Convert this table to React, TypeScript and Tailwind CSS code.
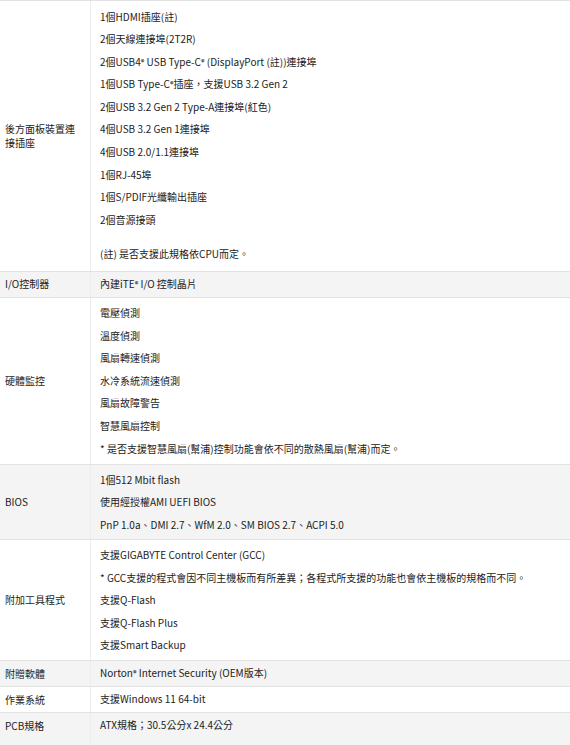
import React from 'react';

type Spec = {
    label: React.ReactNode;
    items: React.ReactNode[];
    shaded?: boolean;
    gapBeforeLast?: boolean;
    pad?: string;
    extraBottom?: boolean;
};

const R = () => <sup className="text-[7px] font-bold relative -top-[1px]">®</sup>;

const specs: Spec[] = [
    {
        label: '後方面板裝置連接插座',
        gapBeforeLast: true,
        pad: 'pt-[4.5px] pb-[4.5px]',
        items: [
            '1個HDMI插座(註)',
            '2個天線連接埠(2T2R)',
            <>2個USB4<R /> USB Type-C<R /> (DisplayPort (註))連接埠</>,
            <>1個USB Type-C<R />插座，支援USB 3.2 Gen 2</>,
            '2個USB 3.2 Gen 2 Type-A連接埠(紅色)',
            '4個USB 3.2 Gen 1連接埠',
            '4個USB 2.0/1.1連接埠',
            '1個RJ-45埠',
            '1個S/PDIF光纖輸出插座',
            '2個音源接頭',
            '(註) 是否支援此規格依CPU而定。',
        ],
    },
    { label: 'I/O控制器', shaded: true, items: [<>內建iTE<R /> I/O 控制晶片</>] },
    {
        label: '硬體監控',
        pad: 'pt-[4.5px] pb-[3.5px]',
        items: [
            '電壓偵測',
            '溫度偵測',
            '風扇轉速偵測',
            '水冷系統流速偵測',
            '風扇故障警告',
            '智慧風扇控制',
            '* 是否支援智慧風扇(幫浦)控制功能會依不同的散熱風扇(幫浦)而定。',
        ],
    },
    {
        label: 'BIOS',
        shaded: true,
        pad: 'pt-[4px] pb-[3px]',
        items: ['1個512 Mbit flash', '使用經授權AMI UEFI BIOS', 'PnP 1.0a、DMI 2.7、WfM 2.0、SM BIOS 2.7、ACPI 5.0'],
    },
    {
        label: '附加工具程式',
        pad: 'pt-[3.5px] pb-[3px]',
        items: [
            '支援GIGABYTE Control Center (GCC)',
            '* GCC支援的程式會因不同主機板而有所差異；各程式所支援的功能也會依主機板的規格而不同。',
            '支援Q-Flash',
            '支援Q-Flash Plus',
            '支援Smart Backup',
        ],
    },
    { label: '附贈軟體', shaded: true, items: [<>Norton<R /> Internet Security (OEM版本)</>] },
    { label: '作業系統', items: ['支援Windows 11 64-bit'] },
    { label: 'PCB規格', shaded: true, items: ['ATX規格；30.5公分x 24.4公分'], extraBottom: true },
];

export default function App() {
    return (
        <div
            className="w-[570px] min-h-[745px] bg-white text-[10px] text-[#222]"
            style={{ fontFamily: '"Noto Sans CJK TC", "Noto Sans", sans-serif' }}
        >
            <div className="border-t border-[#e2e2e2]">
                {specs.map((s, i) => {
                    const single = s.items.length === 1;
                    return (
                        <div
                            key={i}
                            className={`flex border-b border-[#e2e2e2] ${s.shaded ? 'bg-[#f4f4f4]' : 'bg-white'}`}
                        >
                            {/* etykieta */}
                            <div
                                className={`w-[91px] shrink-0 pl-[5px] pr-[10px] flex items-center leading-[13.5px] border-r border-[#ececec] ${s.extraBottom ? 'pb-[10px]' : ''}`}
                            >
                                {s.label}
                            </div>
                            {/* wartości */}
                            {single ? (
                                <div className={`flex-1 pl-[9px] pt-[4.5px] leading-[16px] ${s.extraBottom ? 'pb-[14.5px]' : 'pb-[4.5px]'}`}>
                                    {s.items[0]}
                                </div>
                            ) : (
                                <div className={`flex-1 pl-[9px] ${s.pad}`}>
                                    {s.items.map((it, j) => (
                                        <div
                                            key={j}
                                            className={`leading-[22.6px] ${s.gapBeforeLast && j === s.items.length - 1 ? 'mt-[12px]' : ''}`}
                                        >
                                            {it}
                                        </div>
                                    ))}
                                </div>
                            )}
                        </div>
                    );
                })}
            </div>
        </div>
    );
}
